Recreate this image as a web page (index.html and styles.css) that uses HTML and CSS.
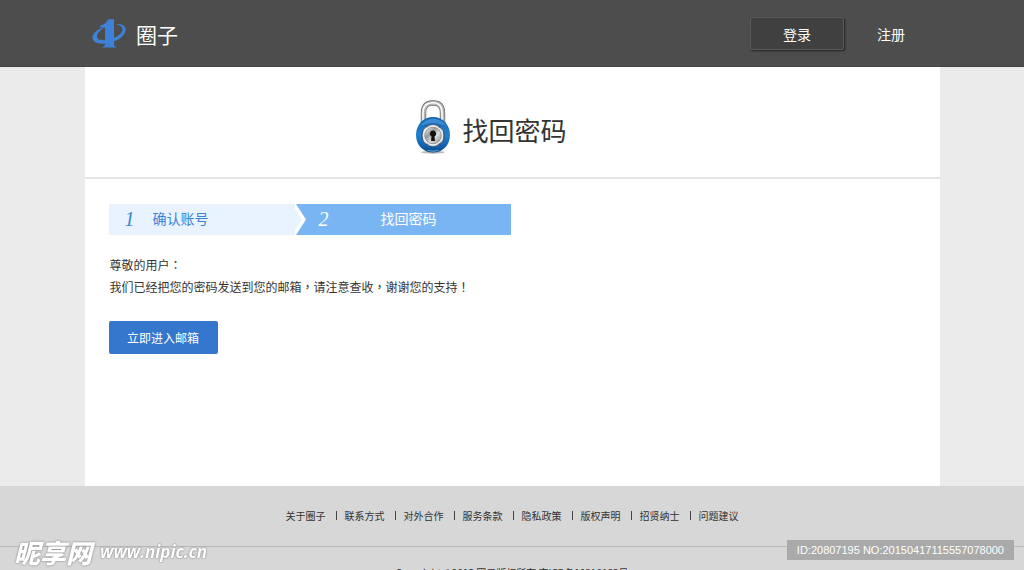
FILE: index.html
```
<!DOCTYPE html>
<html lang="zh-CN">
<head>
<meta charset="utf-8">
<meta name="viewport" content="width=device-width, initial-scale=1">
<title>找回密码 - 圈子</title>
<link rel="stylesheet" href="styles.css">
</head>
<body>
<header class="topbar">
  <div class="topbar-inner">
    <a class="brand" href="#">
      <svg class="brand-mark" viewBox="0 0 34 30" aria-hidden="true">
        <path fill="#3d82d8" d="M8 7 Q14 5 16 0.500 L22 0 V25 Q22 27.500 25 28.500 H9.500 Q13 27.500 13 25 V8.500 H8 Z"/>
        <path fill="#3d82d8" fill-rule="evenodd" d="M23.500 5 C30 4.500 34.500 7 33.500 11.500 C32 18 25.500 22 17 24 C7 26 0 23.500 0.500 18 C1 13.500 6 10 12 8.500 C7.500 12 5 14.500 5 17.500 C5 21 10 22 17 20.500 C24.500 18.800 30 15 30.500 10.500 C30.700 7.500 27.500 6 23.500 5 Z"/>
      </svg>
      <span class="brand-name">圈子</span>
    </a>
    <nav class="account">
      <button class="login" type="button">登录</button>
      <a class="register" href="#">注册</a>
    </nav>
  </div>
</header>

<main class="panel">
  <div class="panel-head">
    <svg class="lock" viewBox="0 0 36 54" aria-hidden="true">
      <defs>
        <linearGradient id="steel" x1="0" x2="1" y1="0" y2="0">
          <stop offset="0" stop-color="#777"/><stop offset=".12" stop-color="#eee"/><stop offset=".25" stop-color="#888"/>
          <stop offset=".5" stop-color="#ddd"/><stop offset=".8" stop-color="#777"/><stop offset=".9" stop-color="#eee"/><stop offset="1" stop-color="#666"/>
        </linearGradient>
        <linearGradient id="body" x1="0" x2="0" y1="0" y2="1">
          <stop offset="0" stop-color="#1563ad"/><stop offset=".5" stop-color="#2580cb"/><stop offset=".85" stop-color="#125da7"/><stop offset="1" stop-color="#0c4480"/>
        </linearGradient>
        <linearGradient id="dial" x1="0" x2="1" y1="0" y2="1">
          <stop offset="0" stop-color="#fff"/><stop offset=".35" stop-color="#999"/><stop offset=".6" stop-color="#ddd"/><stop offset="1" stop-color="#888"/>
        </linearGradient>
      </defs>
      <path d="M8.500 25 V13 C8.500 5.500 12 3 18 3 S27.500 5.500 27.500 13 V25" fill="none" stroke="#666" stroke-width="5.400"/>
      <path d="M8.500 25 V13 C8.500 5.500 12 3 18 3 S27.500 5.500 27.500 13 V25" fill="none" stroke="#b5b5b5" stroke-width="4"/>
      <path d="M8 25 V13 C8 5.500 12 2.700 18 2.700 S27 5.500 27 13 V25" fill="none" stroke="#fafafa" stroke-width="1.600"/>
      <ellipse cx="18" cy="52.300" rx="12" ry="1.400" fill="#bbb"/>
      <path d="M18 17 C28 17 35 25 35 35 S28 52.500 18 52.500 S1 45 1 35 S8 17 18 17 Z" fill="url(#body)"/>
      <path d="M11 50 Q18 53 25 50 Q18 51.500 11 50 Z" fill="#8fd3ff"/>
      <path d="M5 26 Q10 19 18 18.500 Q27 19 31 26 Q18 20 5 26 Z" fill="#3a8bd2"/>
      <circle cx="18" cy="35.500" r="11.300" fill="url(#steel)" stroke="#104d8c" stroke-width=".8"/>
      <circle cx="18" cy="35.500" r="10" fill="#f2f2f2"/>
      <circle cx="18" cy="35.500" r="8.300" fill="url(#dial)" stroke="#777" stroke-width=".7"/>
      <path d="M18 30.500 a3.200 3.200 0 0 1 1.500 6 L20 41 H16 L16.500 36.500 A3.200 3.200 0 0 1 18 30.500 Z" fill="#111"/>
    </svg>
    <h1 class="title">找回密码</h1>
  </div>

  <div class="panel-body">
    <ol class="steps">
      <li class="step step-done"><span class="step-no">1</span><span class="step-label">确认账号</span>
        <svg class="step-arrow" viewBox="0 0 12 31" aria-hidden="true"><path fill="#fff" d="M0 0H1L11 15.500L1 31H0Z"/><path fill="#e8f3ff" d="M0 5L7 15.500L0 26Z"/></svg>
      </li>
      <li class="step step-now"><span class="step-no">2</span><span class="step-label">找回密码</span></li>
    </ol>
    <div class="message">
      <p>尊敬的用户<span class="mark" lang="zh-TW">：</span></p>
      <p>我们已经把您的密码发送到您的邮箱<span class="mark" lang="zh-TW">，</span>请注意查收<span class="mark" lang="zh-TW">，</span>谢谢您的支持<span class="mark" lang="zh-TW">！</span></p>
    </div>
    <button class="go-mail" type="button">立即进入邮箱</button>
  </div>
</main>

<footer class="footer">
  <nav class="footer-links">
    <a href="#">关于圈子</a><a href="#">联系方式</a><a href="#">对外合作</a><a href="#">服务条款</a><a href="#">隐私政策</a><a href="#">版权声明</a><a href="#">招贤纳士</a><a href="#">问题建议</a>
  </nav>
  <p class="copyright">Copyright ©2013 圈子版权所有 京ICP备10218183号</p>
</footer>

<div class="watermark"><span class="watermark-name">昵享网</span><span class="watermark-url">www.nipic.cn</span></div>
<div class="image-id">ID:20807195 NO:20150417115557078000</div>
</body>
</html>
```
FILE: styles.css
```
* { box-sizing: border-box; }
html, body { height: 100%; }
body {
  margin: 0;
  display: flex;
  flex-direction: column;
  overflow: hidden;
  background: #ebebeb;
  color: #333;
  font: 12px/22px "Noto Sans CJK SC", sans-serif;
}
a { color: inherit; text-decoration: none; }
button { font: inherit; border: 0; padding: 0; cursor: pointer; }
p, h1, ol { margin: 0; padding: 0; }

.topbar { background: #4d4d4d; border-bottom: 1px solid #444; color: #fff; }
.topbar-inner {
  max-width: 856px;
  height: 66px;
  margin: 0 auto;
  padding: 1px 35px 0 8px;
  display: flex;
  align-items: center;
  justify-content: space-between;
}
.brand { display: flex; align-items: center; gap: 10px; }
.brand-mark { width: 34px; height: 30px; }
.brand-name { font-size: 21px; line-height: 32px; }
.account { display: flex; align-items: center; gap: 33px; font-size: 14px; }
.login {
  width: 94px;
  height: 33px;
  background: #404040;
  color: #fff;
  border: 1px solid #5a5a5a;
  border-radius: 2px;
  box-shadow: 1px 1px 2px #222;
}
.login, .register { line-height: 28px; }

.panel { flex: none; width: 100%; max-width: 855px; min-height: 419px; margin: 0 auto; background: #fff; }
.panel-head {
  display: flex;
  align-items: center;
  justify-content: center;
  gap: 11px;
  height: 112px;
  padding: 10px 42px 0 0;
  border-bottom: 2px solid #e6e6e6;
}
.lock { width: 36px; height: 54px; }
.title { padding-top: 6px; font-size: 26px; line-height: 36px; font-weight: 400; }

.panel-body { padding: 25px 24px; }
.steps { display: flex; list-style: none; max-width: 402px; font-size: 14px; line-height: 29px; }
.step { display: flex; position: relative; height: 31px; }
.step-no { font: italic 20px/31px "Liberation Serif", serif; }
.step-done { flex: 0 0 186px; background: #e8f3ff; color: #3c82d6; padding-left: 16px; gap: 18px; }
.step-now { flex: 1; background: #7ab5f3; color: #fff; padding-left: 24px; gap: 52px; }
.step-arrow { position: absolute; left: 100%; top: 0; width: 12px; height: 31px; z-index: 1; }
.message { margin-top: 19px; padding-left: 1px; }
.mark { font-family: "Noto Sans CJK TC", sans-serif; }
.go-mail { margin-top: 23px; width: 109px; height: 33px; border-radius: 2px; background: #3477cd; color: #fff; }

.footer { flex: 1 0 auto; background: #d7d7d7; text-align: center; }
.footer-links {
  display: flex;
  justify-content: center;
  height: 61px;
  padding-top: 24px;
  border-bottom: 1px solid #b8b8b8;
  font-size: 10px;
  line-height: 11px;
}
.footer-links a + a::before {
  content: "";
  display: inline-block;
  width: 1px;
  height: 9px;
  margin: 0 8px 0 10px;
  background: #444;
}
.copyright { height: 23px; padding-top: 18px; overflow: hidden; font-size: 10px; line-height: 16px; }

.watermark {
  position: fixed;
  left: 14px;
  bottom: 4px;
  display: flex;
  align-items: center;
  gap: 8px;
  color: #fff;
  font-style: italic;
  font-weight: 900;
  line-height: 28px;
  text-shadow: 0 0 2px #777, 0 0 1px #999;
}
.watermark-name { font-size: 26px; }
.watermark-url { font-family: "Open Sans", sans-serif; font-size: 17px; font-weight: 700; }
.image-id {
  position: fixed;
  right: 10px;
  bottom: 10px;
  padding: 0 10px;
  background: #aaa;
  color: #fff;
  font: 11px/20px "Liberation Sans", sans-serif;
}
```
